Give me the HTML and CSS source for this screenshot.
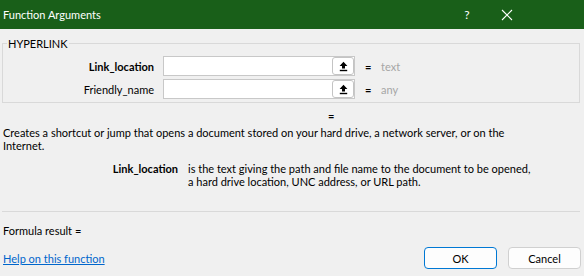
FILE: index.html
```html
<!DOCTYPE html>
<html lang="en">
<head>
    <meta charset="UTF-8">
    <title>Function Arguments</title>
    <link rel="stylesheet" href="styles.css">
</head>
<body>
    <div class="dialog">
        <div class="titlebar">
            <span class="title">Function Arguments</span>
            <span class="title-buttons">
                <span class="help-btn">?</span>
                <span class="close-btn">
                    <svg width="12" height="12" viewBox="0 0 12 12">
                        <path d="M1 1 L11 11 M11 1 L1 11" stroke="#ffffff" stroke-width="1.1" fill="none"/>
                    </svg>
                </span>
            </span>
        </div>

        <div class="content">
            <fieldset class="args">
                <legend>HYPERLINK</legend>
                <div class="arg-row">
                    <label class="arg-name required">Link_location</label>
                    <div class="arg-input"><span class="ref-btn"><svg width="11" height="11" viewBox="0 0 11 11"><path d="M5.5 0.8 L1.6 4.9 H4 V7.6 H7 V4.9 H9.4 Z" fill="#000"/><rect x="1.8" y="8.8" width="7.4" height="1.4" fill="#000"/></svg></span></div>
                    <span class="eq">=</span>
                    <span class="arg-value">text</span>
                </div>
                <div class="arg-row">
                    <label class="arg-name">Friendly_name</label>
                    <div class="arg-input"><span class="ref-btn"><svg width="11" height="11" viewBox="0 0 11 11"><path d="M5.5 0.8 L1.6 4.9 H4 V7.6 H7 V4.9 H9.4 Z" fill="#000"/><rect x="1.8" y="8.8" width="7.4" height="1.4" fill="#000"/></svg></span></div>
                    <span class="eq">=</span>
                    <span class="arg-value">any</span>
                </div>
            </fieldset>

            <div class="result-eq">=</div>

            <p class="desc">Creates a shortcut or jump that opens a document stored on your hard drive, a network server, or on the Internet.</p>

            <div class="arg-help">
                <span class="arg-help-name">Link_location</span>
                <span class="arg-help-text">is the text giving the path and file name to the document to be opened, a hard drive location, UNC address, or URL path.</span>
            </div>

            <div class="divider"></div>

            <div class="formula">Formula result =</div>

            <div class="footer">
                <a href="#" class="help-link">Help on this function</a>
                <div class="buttons">
                    <button class="btn btn-default">OK</button>
                    <button class="btn">Cancel</button>
                </div>
            </div>
        </div>
    </div>
</body>
</html>
```

FILE: styles.css
```css
body {
    margin: 0;
    padding: 0;
    background: #f0f0f0;
    font-family: Lato, "Noto Sans", sans-serif;
    font-size: 11px;
    color: #000000;
}
.dialog {
    width: 584px;
    height: 276px;
    overflow: hidden;
}
.titlebar {
    height: 29px;
    background: #195f19;
    color: #ffffff;
    display: flex;
    align-items: center;
    justify-content: space-between;
    padding: 0 0 0 3px;
}
.title {
    font-size: 11px;
}
.title-buttons {
    display: flex;
    align-items: center;
    margin-right: 57px;
}
.help-btn {
    font-size: 12px;
    width: 40px;
    text-align: center;
}
.close-btn {
    width: 40px;
    display: flex;
    justify-content: center;
}
.content {
    padding: 0 4px 0 2px;
}
.args {
    margin: 8px 0 0 0;
    padding: 6px 0 3px 0;
    border: 1px solid #d9d9d9;
}
.args legend {
    margin-left: 4px;
    padding: 0 1px;
}
.arg-row {
    display: flex;
    align-items: center;
    height: 20px;
    margin-bottom: 3px;
}
.arg-row:last-child {
    margin-bottom: 0;
}
.arg-name {
    width: 151px;
    text-align: right;
    margin-right: 9px;
}
.required {
    font-weight: bold;
}
.arg-input {
    width: 192px;
    height: 20px;
    box-sizing: border-box;
    background: #ffffff;
    border: 1px solid #c8c8c8;
    display: flex;
    justify-content: flex-end;
}
.ref-btn {
    width: 22px;
    height: 18px;
    box-sizing: border-box;
    border: 1px solid #c4c4c4;
    border-radius: 3px;
    display: flex;
    align-items: center;
    justify-content: center;
}
.eq {
    margin-left: 10px;
    width: 16px;
    font-weight: bold;
}
.arg-value {
    color: #a6a6a6;
}
.result-eq {
    margin: 6px 0 0 326px;
    height: 14px;
    font-weight: bold;
}
.desc {
    margin: 3px 0 0 1px;
    width: 520px;
    line-height: 13px;
}
.arg-help {
    display: flex;
    margin-top: 11px;
    line-height: 12.5px;
}
.arg-help-name {
    width: 176px;
    text-align: right;
    font-weight: bold;
    margin-right: 10px;
    flex-shrink: 0;
}
.arg-help-text {
    width: 346px;
}
.divider {
    height: 1px;
    background: #d9d9d9;
    margin-top: 23px;
}
.formula {
    margin: 12px 0 0 1px;
}
.footer {
    display: flex;
    justify-content: space-between;
    align-items: center;
    margin-top: 10px;
    padding-left: 1px;
}
.help-link {
    color: #0066cc;
}
.buttons {
    display: flex;
    gap: 11px;
    margin-right: -1px;
}
.btn {
    width: 73px;
    height: 22px;
    background: #fdfdfd;
    border: 1px solid #d0d0d0;
    border-radius: 4px;
    font-family: inherit;
    font-size: 11px;
    color: #000000;
}
.btn-default {
    border-color: #0078d4;
}
```
